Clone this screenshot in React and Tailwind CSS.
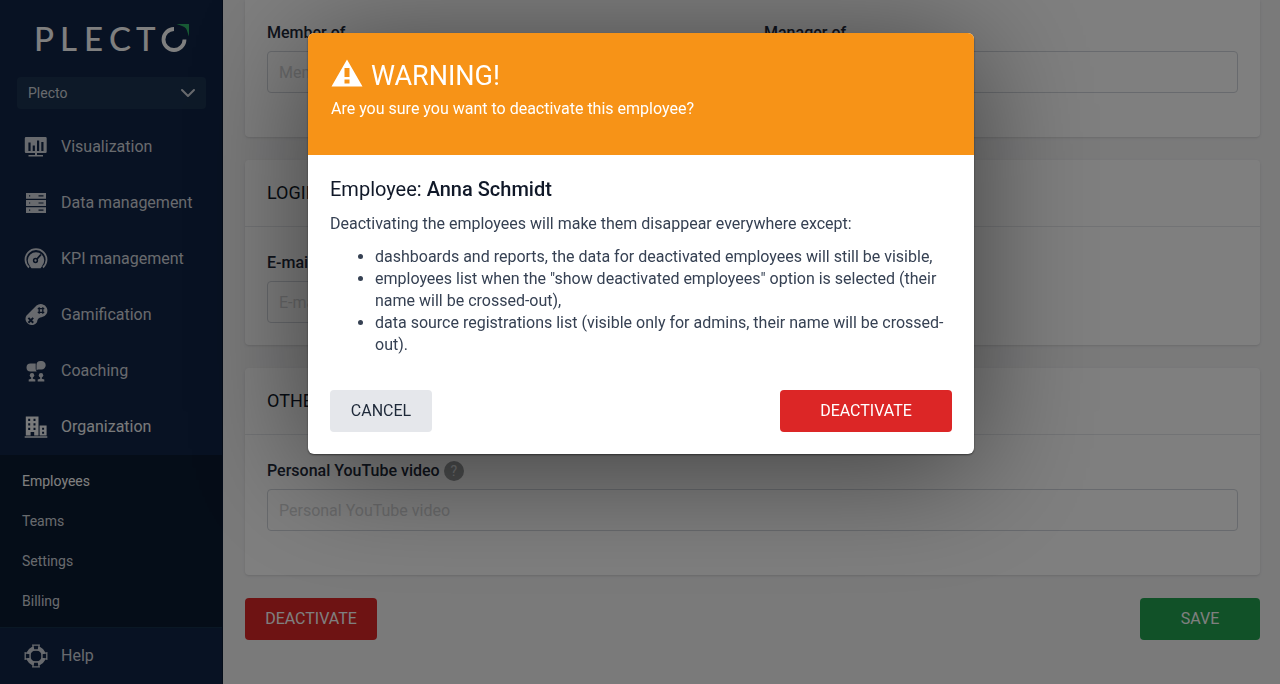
import { ChevronDown } from "lucide-react";

function VisualizationIcon() {
  return (
    <svg viewBox="0 0 24 24" className="size-6" fill="currentColor" aria-hidden>
      <path
        fillRule="evenodd"
        d="M2 2h19.500a1.200 1.200 0 0 1 1.200 1.200v13.600a1.200 1.200 0 0 1-1.200 1.200H13v2h6v1.600H4.500V20H11v-2H2a1.200 1.200 0 0 1-1.200-1.200V3.200A1.200 1.200 0 0 1 2 2Zm2.400 5.500v8.500h2.200V7.500Zm4.300 3v5.500h2.200v-5.500Zm4.300-5v10.500h2.200V5.500Zm4.300 1.500v9h2.200V7Z"
      />
    </svg>
  );
}

function DataIcon() {
  return (
    <svg viewBox="0 0 24 24" className="size-6" fill="currentColor" aria-hidden>
      <path
        fillRule="evenodd"
        d="M2 2h20v5.800H2Zm3 2.300v1.200h1.200V4.300Zm9.500 0v1.200h5V4.300ZM2 9.100h20v5.800H2Zm3 2.300v1.200h1.200v-1.200Zm9.500 0v1.200h5v-1.200ZM2 16.200h20V22H2Zm3 2.300v1.200h1.200v-1.200Zm9.500 0v1.200h5v-1.200Z"
      />
    </svg>
  );
}

function KpiIcon() {
  return (
    <svg viewBox="0 0 24 24" className="size-6" aria-hidden>
      <path
        d="M5 20.500a10.500 10.500 0 1 1 14 0"
        fill="none"
        stroke="currentColor"
        strokeWidth="1.800"
      />
      <path
        d="M5.800 18.800a8.200 8.200 0 1 1 12.400 0a5 5 0 0 1-1.700 2.400h-9a5 5 0 0 1-1.700-2.400Z"
        fill="currentColor"
      />
      <circle cx="11.500" cy="13.500" r="1.900" fill="none" stroke="#102446" strokeWidth="1.500" />
      <path d="m13 12 4-4.500" stroke="#102446" strokeWidth="1.800" />
    </svg>
  );
}

function GamificationIcon() {
  return (
    <svg viewBox="0 0 24 24" className="size-6" aria-hidden>
      <path
        d="M12.500 2.600a6.600 6.600 0 1 1 5 11.600c-1.800.1-3 .8-4 2.800l-.5 2.200A6.200 6.200 0 1 1 2.500 12.500Z"
        fill="currentColor"
      />
      <g stroke="#102446" fill="none">
        <path d="m4.400 14.900 4.800 4.800m0-4.800-4.800 4.800" strokeWidth="2" />
        <path d="M15.200 4.200v6.600M18.800 4.200v6.600M13.700 5.700h6.600M13.700 9.300h6.600" strokeWidth="1.300" />
      </g>
    </svg>
  );
}

function CoachingIcon() {
  return (
    <svg viewBox="0 0 24 24" className="size-6" fill="currentColor" aria-hidden>
      <path d="M6.500 4.500h5.200v5.300c0 1 .3 2 1 2.700H6.500a4 4 0 0 1 0-8Z" />
      <path d="M17.500 2a4.200 4.200 0 0 1 0 8.400h-3c-.8 0-1.600.4-2 .9V6a4 4 0 0 1 4-4Z" />
      <circle cx="8" cy="16.300" r="2.200" />
      <path d="M7.200 17.500h1.600v2.300l2.500.8V22.500H4.700v-1.900l2.500-.8Z" />
      <circle cx="17" cy="16.300" r="2.200" />
      <path d="M16.200 17.500h1.600v2.300l2.500.8V22.500h-6.600v-1.900l2.500-.8Z" />
    </svg>
  );
}

function OrganizationIcon() {
  return (
    <svg viewBox="0 0 24 24" className="size-6" fill="currentColor" aria-hidden>
      <path
        fillRule="evenodd"
        d="M1.800 1.500h12.700v19h-4.300V17H6.600v3.500H1.800Zm2.400 2.300V6h2V3.800Zm5.300 0V6h2V3.800ZM4.200 8.200v2.200h2V8.200Zm5.300 0v2.200h2V8.200Zm-5.300 4.600V15h2v-2.200Zm5.300 0V15h2v-2.200Z"
      />
      <path
        fillRule="evenodd"
        d="M15.600 10.500h7v10h-7Zm2.500 2.200v2h2v-2Zm0 4v2h2v-2Z"
      />
      <path d="M.7 21.300h22.600v1.400H.7Z" />
    </svg>
  );
}

function HelpIcon() {
  return (
    <svg viewBox="0 0 24 24" className="size-6" fill="none" aria-hidden>
      <circle cx="12" cy="12" r="7.800" stroke="currentColor" strokeWidth="4.200" />
      <g fill="#102446" stroke="currentColor" strokeWidth="1.300">
        <path d="M8.800 1.200h6.400l-.9 4.800H9.700Z" />
        <path d="M8.800 22.800h6.400l-.9-4.800H9.700Z" />
        <path d="M1.200 8.800v6.400l4.800-.9V9.700Z" />
        <path d="M22.800 8.800v6.400l-4.800-.9V9.700Z" />
      </g>
    </svg>
  );
}

function Logo() {
  return (
    <svg viewBox="-4 -6 160 48" className="h-12 w-40" role="img" aria-label="Plecto">
      <text
        x="-3 23 47 72 99"
        y="30"
        fontSize="33"
        className="fill-white font-['Lato',sans-serif] font-medium"
      >
        PLECT
      </text>
      <path
        d="M137 8a10.500 10.500 0 1 0 10.500 10.500"
        fill="none"
        stroke="white"
        strokeWidth="3.800"
      />
      <path d="M139.500 3H152v12.500c-1.500-4-2-6.500-3-8-2-2.500-5.500-3-9.500-4.500Z" fill="#2fb368" />
    </svg>
  );
}

const navItems = [
  { label: "Visualization", icon: VisualizationIcon },
  { label: "Data management", icon: DataIcon },
  { label: "KPI management", icon: KpiIcon },
  { label: "Gamification", icon: GamificationIcon },
  { label: "Coaching", icon: CoachingIcon },
  { label: "Organization", icon: OrganizationIcon, active: true },
];

const subItems = ["Employees", "Teams", "Settings", "Billing"];

function NavLink({ label, icon: Icon, active }) {
  return (
    <a
      href="#"
      className={`flex h-14 items-center gap-[13px] px-6 ${active ? "text-gray-100" : "text-gray-300"}`}
    >
      <Icon />
      {label}
    </a>
  );
}

function Sidebar() {
  return (
    <aside className="flex min-h-screen w-[223px] shrink-0 flex-col border-r border-[#0b1a33] bg-[#102446]">
      <div className="flex h-[77px] items-center pl-[33px]">
        <Logo />
      </div>
      <div className="relative mr-4 mb-[10px] ml-[17px]">
        <select
          aria-label="Organization"
          className="h-8 w-full appearance-none rounded bg-[#1b3350] px-[11px] text-sm text-gray-300"
        >
          <option>Plecto</option>
        </select>
        <ChevronDown
          className="pointer-events-none absolute top-1 right-1.5 size-6 text-gray-300"
          aria-hidden
        />
      </div>
      <nav className="flex grow flex-col">
        {navItems.map((item) => (
          <NavLink key={item.label} {...item} />
        ))}
        <div className="grow border-b border-[#14304a] bg-[#0b1a30] py-[6px]">
          {subItems.map((label, i) => (
            <a
              key={label}
              href="#"
              className={`flex h-10 items-center px-[22px] text-sm ${i === 0 ? "text-white" : "text-gray-300"}`}
            >
              {label}
            </a>
          ))}
        </div>
        <NavLink label="Help" icon={HelpIcon} />
      </nav>
    </aside>
  );
}

function Field({ id, label, help }) {
  return (
    <div>
      <div className="mb-[7px] flex items-center gap-1">
        <label htmlFor={id} className="leading-[22px] font-medium text-gray-800">
          {label}
        </label>
        {help && (
          <button
            type="button"
            aria-label={`About ${label}`}
            className="-my-1 flex size-5 items-center justify-center rounded-full bg-[#9a9d9e] text-sm text-gray-200"
          >
            ?
          </button>
        )}
      </div>
      <input
        id={id}
        type="text"
        placeholder={label}
        className="h-[42px] w-full rounded border border-gray-300 bg-white px-[11px] placeholder:text-[#d3d4d6]"
      />
    </div>
  );
}

function CardTitle({ children }) {
  return (
    <h2 className="flex h-[67px] items-center border-b border-gray-200 px-[22px] text-lg text-gray-900">
      {children}
    </h2>
  );
}

function EmployeeForm() {
  return (
    <main className="flex grow flex-col gap-[23px] pr-5 pb-10 pl-[22px]">
      <section className="grid grid-cols-2 gap-[23px] rounded-b bg-white px-[22px] pt-[22px] pb-11 shadow-sm">
        <Field id="member" label="Member of" />
        <Field id="manager" label="Manager of" />
      </section>
      <section className="rounded bg-white shadow-sm">
        <CardTitle>LOGIN</CardTitle>
        <div className="grid grid-cols-2 gap-[23px] px-[22px] pt-[25px] pb-[22px]">
          <Field id="email" label="E-mail" />
        </div>
      </section>
      <section className="rounded bg-white shadow-sm">
        <CardTitle>OTHER</CardTitle>
        <div className="px-[22px] pt-[25px] pb-11">
          <Field id="youtube" label="Personal YouTube video" help />
        </div>
      </section>
      <div className="flex justify-between">
        <button type="button" className="h-[42px] w-[132px] rounded bg-[#dc2626] text-white">
          DEACTIVATE
        </button>
        <button type="button" className="h-[42px] w-[120px] rounded bg-[#22a350] text-white">
          SAVE
        </button>
      </div>
    </main>
  );
}

function WarningDialog() {
  return (
    <div className="fixed inset-0 flex items-start justify-center bg-black/50 pt-[33px] pl-0.5">
      <div
        role="alertdialog"
        aria-modal="true"
        aria-labelledby="warning-title"
        className="w-[666px] overflow-hidden rounded-md bg-white text-gray-700 shadow-[0_14px_120px_rgba(0,0,0,0.5),0_1px_2px_rgba(0,0,0,0.5)]"
      >
        <header className="bg-[#f79317] px-[23px] pt-[22px] pb-[34px] text-white">
          <h1 id="warning-title" className="flex items-center gap-2 text-[27px] leading-[42px]">
            <svg viewBox="0 0 32 28" className="mb-1.5 h-7 w-8" fill="currentColor" aria-hidden>
              <path
                fillRule="evenodd"
                d="M16 .5 31.500 27.500H.5ZM13.500 9v9h5V9Zm0 11.500v4h5v-4Z"
              />
              <path d="M14.800 10.200h2.400v6.600h-2.400Z" fill="#f79317" />
            </svg>
            WARNING!
          </h1>
          <p className="leading-6">Are you sure you want to deactivate this employee?</p>
        </header>
        <div className="px-[22px] pt-[22px] pb-[22px] leading-[22px]">
          <h2 className="mb-3 text-xl leading-6 text-gray-900">
            Employee: <strong className="font-medium">Anna Schmidt</strong>
          </h2>
          <p className="mb-[11px]">
            Deactivating the employees will make them disappear everywhere except:
          </p>
          <ul className="mb-[34px] list-disc pl-[45px]">
            <li>dashboards and reports, the data for deactivated employees will still be visible,</li>
            <li>
              employees list when the "show deactivated employees" option is selected (their name
              will be crossed-out),
            </li>
            <li>
              data source registrations list (visible only for admins, their name will be
              crossed-out).
            </li>
          </ul>
          <div className="flex justify-between">
            <button type="button" className="h-[42px] w-[102px] rounded bg-gray-200 text-gray-800">
              CANCEL
            </button>
            <button type="button" className="h-[42px] w-[172px] rounded bg-[#dc2626] text-white">
              DEACTIVATE
            </button>
          </div>
        </div>
      </div>
    </div>
  );
}

export default function App() {
  return (
    <div className="flex min-h-screen bg-[#f4f4f5] font-['Roboto',sans-serif] text-base">
      <Sidebar />
      <EmployeeForm />
      <WarningDialog />
    </div>
  );
}
